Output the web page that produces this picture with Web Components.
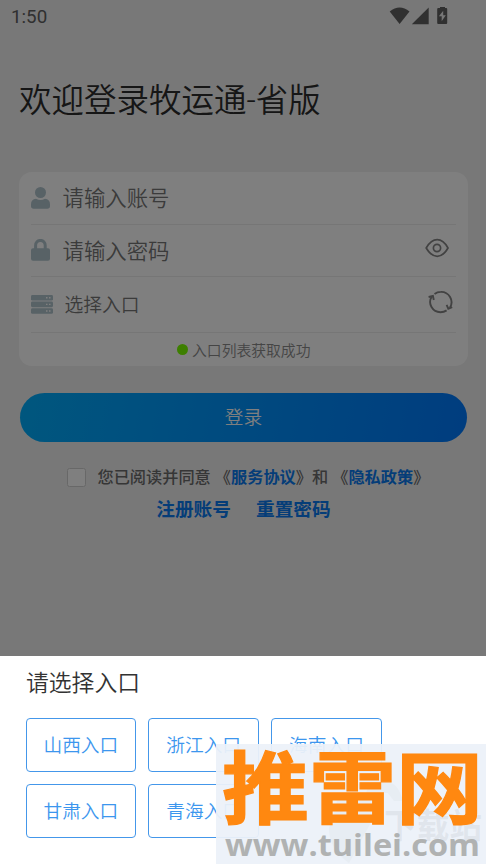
<!DOCTYPE html>
<html lang="zh-CN">
<head>
<meta charset="utf-8">
<title>牧运通</title>
<style>
html,body{margin:0;height:100%;overflow:hidden}
body{font-family:Roboto,"Noto Sans CJK SC",sans-serif;background:#f1f1f1;color:#333}
</style>
</head>
<body>
<login-app></login-app>
<script>
const define = (name, html) => customElements.define(name, class extends HTMLElement {
  constructor() {
    super();
    const t = document.createElement('template');
    t.innerHTML = html;
    this.attachShadow({mode: 'open'}).append(t.content.cloneNode(true));
  }
});

define('status-bar', `<style>
:host{display:flex;justify-content:space-between;align-items:center;height:34px;padding:0 37.5px 0 11px;box-sizing:border-box;font:400 18.8px Roboto,sans-serif;color:#606060}
svg{display:block;margin-top:-2px}
</style><span>1:50</span>
<svg width="60" height="18" viewBox="0 0 60 18" fill="#606060"><path d="M.7 4.4Q10.6-3.2 20.5 4.4L10.6 17z"/><path d="M39.7.6V17.3H22.8z"/><path d="M51-.2h5v1.3h1.2q1 0 1 1v14q0 1-1 1h-8q-1 0-1-1V2.1q0-1 1-1H51z"/><path d="M54.2 3.8l-4.3 5.4h2.8v5.1l4.1-6h-2.6z" fill="#ededed"/></svg>`);

define('field-row', `<style>
:host{display:flex;align-items:center;box-sizing:border-box;border-bottom:1.5px solid #ececec;color:#777;font-size:21.4px;line-height:30px;font-weight:350}
.icon{width:31.5px;flex:none;display:flex}
.label{flex:1;padding-top:3px}
::slotted(svg){display:block}
</style><span class="icon"><slot name="icon"></slot></span><span class="label"><slot></slot></span><slot name="action"></slot>`);

define('login-button', `<style>
:host{display:flex;align-items:center;justify-content:center;box-sizing:border-box;height:48.5px;padding-bottom:3px;border-radius:25px;background:linear-gradient(100deg,#00aefd 0%,#0096ff 45%,#007aff 100%);color:#fff;font-size:18.7px;font-weight:350}
</style><slot></slot>`);

define('check-box', `<style>
:host{display:block;box-sizing:border-box;width:19.5px;height:19.5px;border:1px solid #d0d0d0;border-radius:2.5px;background:#fff}
</style>`);

define('text-link', `<style>:host{display:inline;color:#0a7bf0;font-weight:700}</style><slot></slot>`);

define('entry-button', `<style>
:host{display:flex;align-items:center;justify-content:center;box-sizing:border-box;height:54px;padding-bottom:4px;border:1.5px solid #4497ea;border-radius:4px;color:#3c96ee;font-size:18.7px;font-weight:350}
</style><span><slot></slot></span>`);

define('entry-sheet', `<style>
:host{display:block;box-sizing:border-box;background:#fff;padding:11px 26px 0;color:#333}
h2{font-weight:350;font-size:22.8px;line-height:34px;margin:0 0 17px}
.grid{display:grid;grid-template-columns:repeat(3,110.5px);gap:12.3px;margin-left:-.4px}
</style><h2>请选择入口</h2><div class="grid"><slot></slot></div>`);

define('site-mark', `<style>:host{display:block;width:270px;height:120px}svg{display:block}</style>
<svg width="270" height="120" viewBox="0 0 270 120">
<rect width="270" height="120" fill="#ecf1f9" fill-opacity=".94"/>
<g fill="#899992" opacity=".05"><path d="M123 51q34-12 37 18L133 119q-20-14-20-35z"/><path d="M148 57q3-18 12-18h14q8 1 13 18h-9l-6-8h-11l-6 8z"/></g>
<text x="168" y="94" textLength="98" lengthAdjust="spacingAndGlyphs" font-family="Noto Sans CJK SC" font-size="34" font-weight="700" fill="#858c96" fill-opacity=".13">下载站</text>
<text x="6" y="74" textLength="261" lengthAdjust="spacingAndGlyphs" font-family="Noto Sans CJK SC" font-size="79" font-weight="700" fill="#ff8810" stroke="#ff8810" stroke-width="1.2">推雷网</text>
<text x="9" y="111.5" textLength="255" lengthAdjust="spacingAndGlyphs" font-family="Open Sans" font-size="31" font-weight="700" fill="#b0b2b2">www.tuilei.com</text>
</svg>`);

define('login-app', `<style>
:host{display:flex;flex-direction:column;position:relative;height:864px;width:486px;overflow:hidden;background:#f1f1f1}
.page{height:656px;flex:none;position:relative}
h1{font-weight:350;font-size:32.5px;line-height:44px;margin:45px 19px 0;color:#2c2c2c}
.card{box-sizing:border-box;margin:49px 18px 0 19px;height:194px;padding:0 12px;background:#fff;border-radius:13px}
.account{height:52.5px}.password{height:52.5px}.entry{height:56px;font-size:18.8px}
.entry span{margin-left:2px}
.status{height:33px;display:flex;align-items:center;justify-content:center;gap:4.5px;color:#8a8a8a;font-size:14.8px;font-weight:350}
.dot{width:11px;height:11px;border-radius:50%;background:#7bff00}
login-button{margin:27px 19px 0 20px}
.agree{display:flex;align-items:center;height:24px;margin:24px 0 0 66.5px;font-size:16.2px;font-weight:500;color:#6d6d6d;white-space:nowrap}
.agree p{margin:-3px 0 0 11.5px}
.links{display:flex;justify-content:center;gap:25px;font-size:18.7px;line-height:28px;margin:6.5px 0 0 1px}
.mask{position:absolute;inset:0;background:rgba(0,0,0,.5)}
entry-sheet{flex:1}
site-mark{position:absolute;left:216px;top:744px}
</style>
<div class="page">
<status-bar></status-bar>
<h1>欢迎登录牧运通-省版</h1>
<div class="card">
<field-row class="account"><svg slot="icon" width="19" height="22" viewBox="0 0 19 22" fill="#b0c4cd"><circle cx="9.5" cy="5.5" r="5.5"/><path d="M0 19V17.5Q0 12.2 5 11.8Q9.5 14.4 14 11.8Q19 12.2 19 17.5V19Q19 21.8 16.3 21.8H2.7Q0 21.8 0 19z"/></svg>请输入账号</field-row>
<field-row class="password"><svg slot="icon" width="19" height="22" viewBox="0 0 19 22"><path d="M4.6 11V6.4a4.8 5 0 0 1 9.6 0V11" fill="none" stroke="#b0c4cd" stroke-width="3"/><rect y="9.3" width="19" height="12.4" rx="2" fill="#b0c4cd"/></svg>请输入密码<svg slot="action" width="24" height="20" viewBox="0 0 24 20" fill="none" stroke="#858585" stroke-width="1.7" style="margin:-4px 7.5px 0 0"><path d="M1.2 10Q6 1.7 12.2 1.7T23 10Q18.3 18.3 12.2 18.3T1.2 10z"/><circle cx="12" cy="10" r="3.6"/></svg></field-row>
<field-row class="entry"><svg slot="icon" width="22" height="19" viewBox="0 0 22 19"><g fill="#b0c4cd"><rect width="22" height="5.6" rx="1.4"/><rect y="6.5" width="22" height="5.7" rx="1.4"/><rect y="13.2" width="22" height="5.6" rx="1.4"/></g><path d="M15 2.8h1.5M18 2.8h1.5M15 9.4h1.5M18 9.4h1.5M15 16h1.5M18 16h1.5" stroke="#fff" stroke-width="1.4"/></svg><span>选择入口</span><svg slot="action" width="25" height="24" viewBox="0 0 25 24" fill="none" stroke="#858585" stroke-width="1.9" style="margin:-5px 3px 0 0"><path d="M6.5 3.9Q9.2 1.9 12.8 1.9A10.4 10.3 0 0 1 22 17.5M18.6 20.4Q16 22.2 12.4 22.2A10.2 10.2 0 0 1 3.6 6.8"/><path d="M.6 7L4.9 6 5.8 10M24.2 17.1L20.3 18.7 18.6 14.9"/></svg></field-row>
<div class="status"><i class="dot"></i><span>入口列表获取成功</span></div>
</div>
<login-button>登录</login-button>
<div class="agree"><check-box></check-box><p>您已阅读并同意 《<text-link>服务协议</text-link>》和 《<text-link>隐私政策</text-link>》</p></div>
<div class="links"><text-link>注册账号</text-link><text-link>重置密码</text-link></div>
<div class="mask"></div>
</div>
<entry-sheet><entry-button>山西入口</entry-button><entry-button>浙江入口</entry-button><entry-button>海南入口</entry-button><entry-button>甘肃入口</entry-button><entry-button>青海入口</entry-button></entry-sheet>
<site-mark></site-mark>`);
</script>
</body>
</html>
